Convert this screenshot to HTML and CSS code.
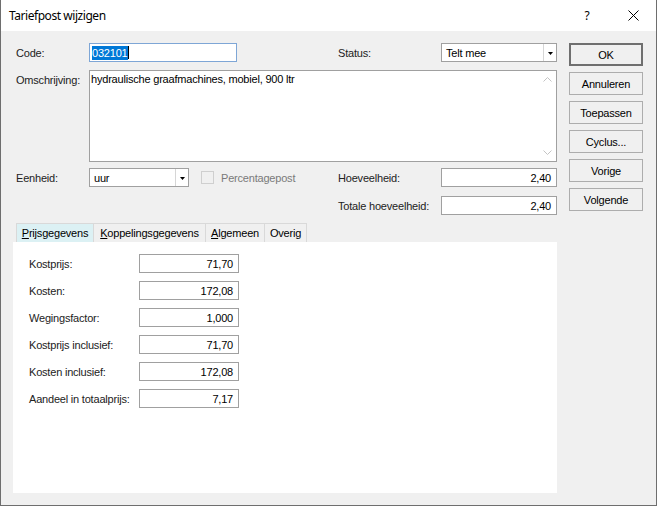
FILE: index.html
```html
<!DOCTYPE html>
<html>
<head>
<meta charset="utf-8">
<link rel="stylesheet" href="styles.css">
</head>
<body>
<div class="window">
  <div class="titlebar">
    <span class="title">Tariefpost wijzigen</span>
    <span class="cap cap-help">?</span>
    <span class="cap cap-close"><svg width="11" height="11" viewBox="0 0 11 11"><path d="M0.5 0.5 L10.5 10.5 M10.5 0.5 L0.5 10.5" stroke="#000" stroke-width="1" fill="none"/></svg></span>
  </div>
  <div class="body">
    <div class="main">
      <div class="row row-code">
        <span class="lbl">Code:</span>
        <div class="field field-code focus"><span class="sel">032101</span><span class="caret"></span></div>
        <span class="lbl lbl-right">Status:</span>
        <div class="combo combo-status">
          <span class="combo-text">Telt mee</span>
          <span class="combo-btn"><svg width="5" height="3" viewBox="0 0 5 3"><path d="M0 0 H5 L2.5 3 Z" fill="#000"/></svg></span>
        </div>
      </div>
      <div class="row row-omschr">
        <span class="lbl lbl-top">Omschrijving:</span>
        <div class="textarea">
          <span class="ta-text">hydraulische graafmachines, mobiel, 900 ltr</span>
          <div class="scroll">
            <svg width="9" height="5" viewBox="0 0 9 5"><path d="M0.5 4.5 L4.5 0.5 L8.5 4.5" stroke="#c4c4c4" fill="none"/></svg>
            <svg width="9" height="5" viewBox="0 0 9 5"><path d="M0.5 0.5 L4.5 4.5 L8.5 0.5" stroke="#c4c4c4" fill="none"/></svg>
          </div>
        </div>
      </div>
      <div class="row row-eenheid">
        <span class="lbl">Eenheid:</span>
        <div class="combo combo-uur">
          <span class="combo-text">uur</span>
          <span class="combo-btn"><svg width="5" height="3" viewBox="0 0 5 3"><path d="M0 0 H5 L2.5 3 Z" fill="#000"/></svg></span>
        </div>
        <span class="check"></span>
        <span class="check-lbl">Percentagepost</span>
        <span class="lbl lbl-right">Hoeveelheid:</span>
        <div class="field field-num field-right">2,40</div>
      </div>
      <div class="row row-totaal">
        <span class="lbl lbl-right lbl-push">Totale hoeveelheid:</span>
        <div class="field field-num field-right">2,40</div>
      </div>
      <div class="tabs">
        <span class="tab tab-active tab-prijs"><u>P</u>rijsgegevens</span>
        <span class="tab tab-kopp"><u>K</u>oppelingsgegevens</span>
        <span class="tab tab-alg"><u>A</u>lgemeen</span>
        <span class="tab tab-ov">Overig</span>
      </div>
      <div class="panel">
        <div class="prow"><span class="plbl">Kostprijs:</span><div class="field field-num pfield">71,70</div></div>
        <div class="prow"><span class="plbl">Kosten:</span><div class="field field-num pfield">172,08</div></div>
        <div class="prow"><span class="plbl">Wegingsfactor:</span><div class="field field-num pfield">1,000</div></div>
        <div class="prow"><span class="plbl">Kostprijs inclusief:</span><div class="field field-num pfield">71,70</div></div>
        <div class="prow"><span class="plbl">Kosten inclusief:</span><div class="field field-num pfield">172,08</div></div>
        <div class="prow"><span class="plbl">Aandeel in totaalprijs:</span><div class="field field-num pfield">7,17</div></div>
      </div>
    </div>
    <div class="buttons">
      <span class="btn btn-default">OK</span>
      <span class="btn">Annuleren</span>
      <span class="btn">Toepassen</span>
      <span class="btn">Cyclus...</span>
      <span class="btn">Vorige</span>
      <span class="btn">Volgende</span>
    </div>
  </div>
</div>
</body>
</html>
```

FILE: styles.css
```css
* { box-sizing: border-box; }
html, body { margin: 0; padding: 0; background: #fff; }
body {
  font-family: "Liberation Sans", Arial, sans-serif;
  font-size: 11px;
  letter-spacing: -0.2px;
  color: #222;
}
.window {
  width: 657px;
  height: 506px;
  border-left: 1px solid #6e6e6e;
  border-right: 1px solid #6e6e6e;
  border-bottom: 1px solid #6e6e6e;
  display: flex;
  flex-direction: column;
  background: #f0f0f0;
}
.titlebar {
  height: 31px;
  background: #fff;
  display: flex;
  align-items: center;
  flex: none;
}
.title {
  font-family: "Noto Sans", "Liberation Sans", sans-serif;
  font-size: 12px;
  letter-spacing: -0.45px;
  color: #000;
  padding-left: 8px;
  flex: 1;
}
.cap {
  width: 46px;
  height: 31px;
  display: flex;
  align-items: center;
  justify-content: center;
  color: #000;
}
.cap-help {
  font-family: "Noto Sans", sans-serif;
  font-size: 12px;
}
.cap-close svg { display: block; margin-left: 1px; }
.body {
  flex: 1;
  display: flex;
  padding: 12px 0 12px 12px;
}
.main {
  width: 544px;
  display: flex;
  flex-direction: column;
}
.row {
  display: flex;
  align-items: center;
  height: 19px;
}
.lbl {
  width: 76px;
  padding-left: 3px;
  flex: none;
}
.lbl-right {
  width: 103px;
  padding-left: 0;
}
.row-code .lbl-right { margin-left: 101px; }
.lbl-push { margin-left: 325px; }
.field {
  height: 19px;
  background: #fff;
  border: 1px solid #a0a0a0;
  display: flex;
  align-items: center;
  color: #000;
}
.field-code {
  width: 148px;
  padding-left: 2px;
}
.focus { border-color: #7ea6d6; }
.sel {
  background: #0078d7;
  color: #fff;
  line-height: 14px;
  height: 14px;
}
.caret {
  width: 1px;
  height: 13px;
  background: #000;
}
.combo {
  height: 19px;
  background: #fff;
  border: 1px solid #a0a0a0;
  display: flex;
  align-items: stretch;
  color: #000;
}
.combo-text {
  flex: 1;
  padding-left: 4px;
  display: flex;
  align-items: center;
}
.combo-btn {
  width: 13px;
  border-left: 1px solid #d6d6d6;
  display: flex;
  align-items: center;
  justify-content: center;
}
.combo-btn svg { display: block; margin-top: 1px; }
.combo-status { width: 116px; }
.combo-uur { width: 100px; }
.row-omschr {
  height: 92px;
  margin-top: 8px;
  align-items: flex-start;
}
.lbl-top { padding-top: 4px; }
.textarea {
  flex: 1;
  height: 92px;
  background: #fff;
  border: 1px solid #a0a0a0;
  display: flex;
  color: #000;
}
.ta-text {
  flex: 1;
  padding: 2px 0 0 1px;
}
.scroll {
  width: 17px;
  display: flex;
  flex-direction: column;
  justify-content: space-between;
  align-items: center;
  padding: 6px 0 6px 0;
}
.scroll svg { display: block; }
.row-eenheid { margin-top: 6px; }
.check {
  width: 13px;
  height: 13px;
  border: 1px solid #cfcfcf;
  margin-left: 12px;
  flex: none;
}
.check-lbl {
  color: #7a7a7a;
  margin-left: 7px;
  width: 117px;
}
.field-num {
  justify-content: flex-end;
  padding-right: 5px;
}
.field-right { width: 116px; }
.row-totaal { margin-top: 9px; }
.tabs {
  display: flex;
  margin-top: 8px;
  height: 19px;
  padding-left: 3px;
}
.tab {
  height: 19px;
  border: 1px solid #d9d9d9;
  border-bottom: none;
  margin-right: -1px;
  display: flex;
  align-items: center;
  justify-content: center;
  background: #f0f0f0;
  color: #000;
}
.tab u { text-decoration: underline; text-underline-offset: 1px; }
.tab-active { background: #dcf1f4; }
.tab-prijs { width: 78px; }
.tab-kopp { width: 113px; }
.tab-alg { width: 60px; }
.tab-ov { width: 43px; }
.panel {
  flex: 1;
  background: #fff;
  display: flex;
  flex-direction: column;
  gap: 8px;
  padding: 12px 0 0 16px;
}
.prow {
  display: flex;
  align-items: center;
  height: 19px;
}
.plbl { width: 110px; flex: none; }
.pfield { width: 100px; }
.buttons {
  margin-left: 12px;
  width: 74px;
  display: flex;
  flex-direction: column;
  gap: 6px;
}
.btn {
  height: 23px;
  border: 1px solid #adadad;
  background: #f0f0f0;
  display: flex;
  align-items: center;
  justify-content: center;
  color: #000;
}
.btn-default {
  border: 2px solid #6f6f6f;
}
```
